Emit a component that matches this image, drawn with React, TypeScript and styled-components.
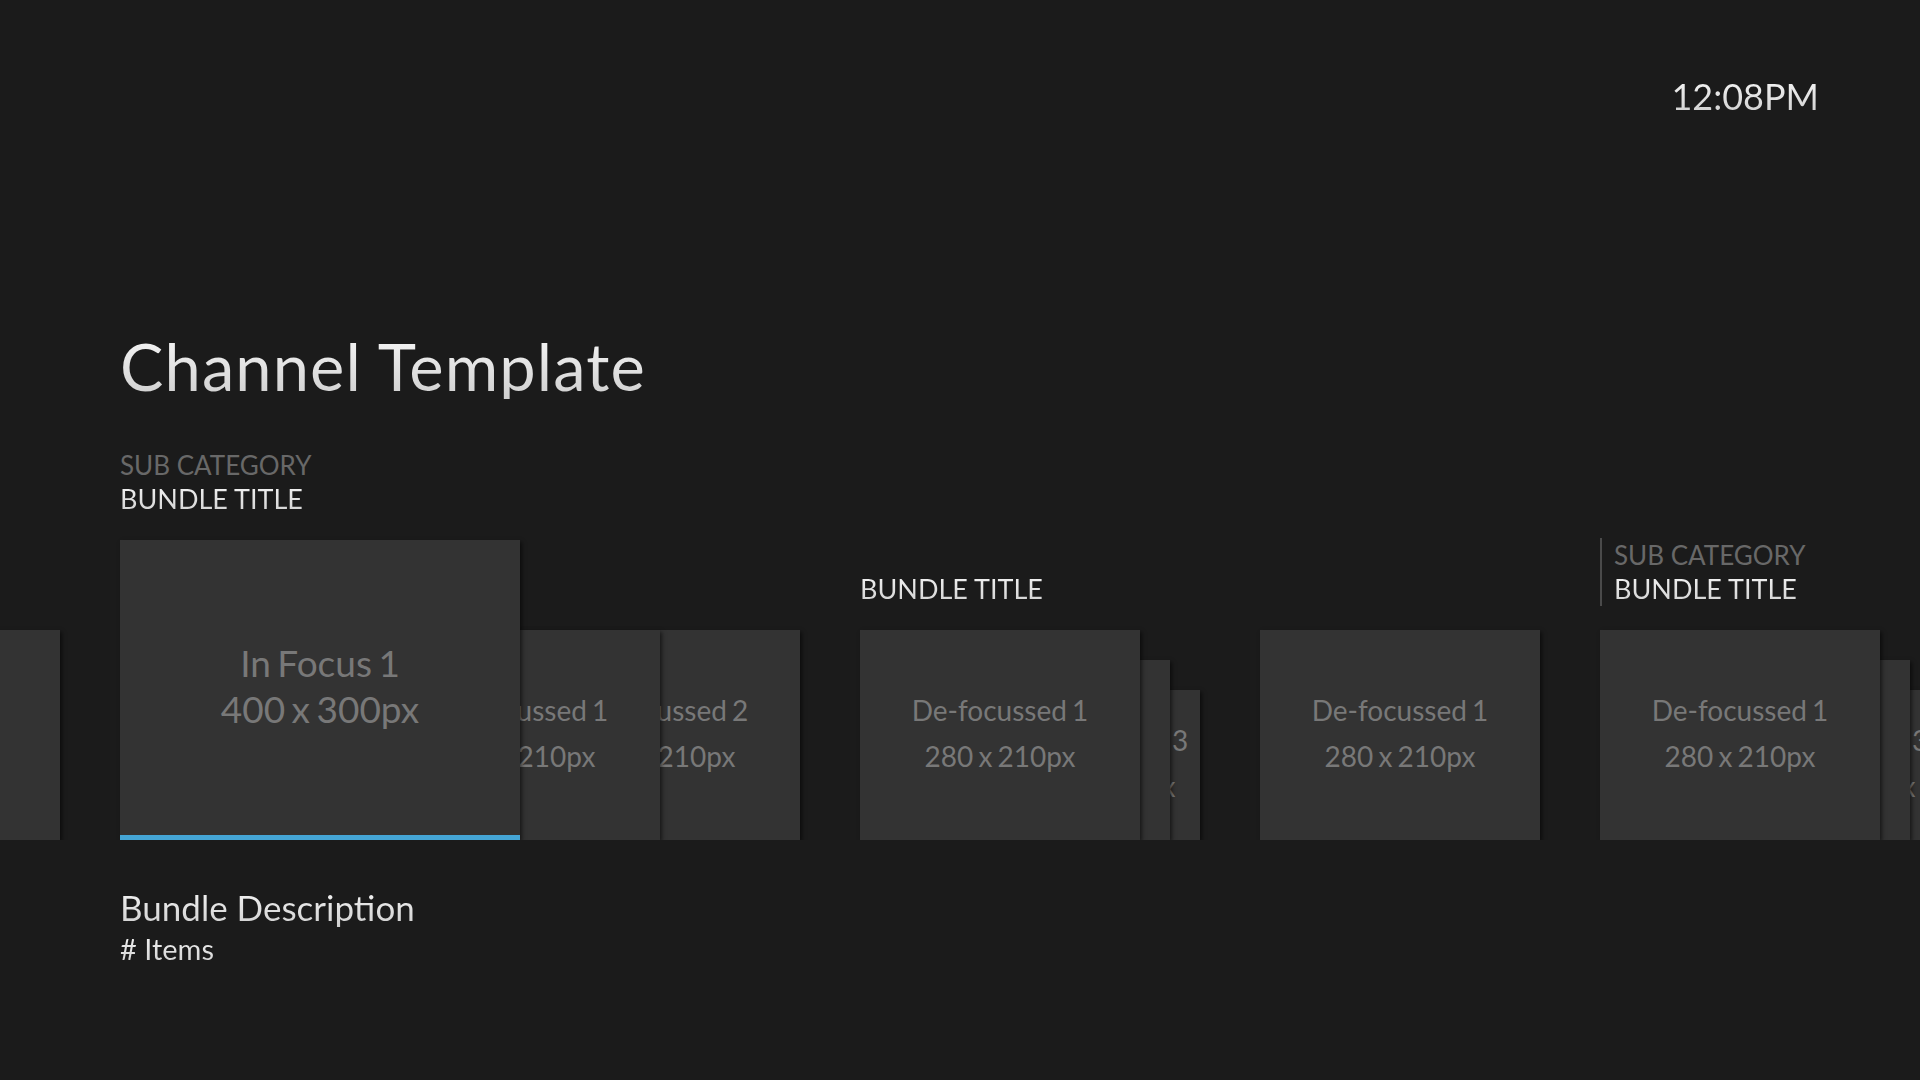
import { FC } from "react";
import styled, { createGlobalStyle, css } from "styled-components";

const GlobalStyle = createGlobalStyle`
    html, body {
        margin: 0;
        padding: 0;
        background: #1b1b1b;
    }
    body {
        font-family: Lato, "Open Sans", sans-serif;
    }
`;

const silver = css`
    background: linear-gradient(180deg, #f6f6f6 0%, #cfcfcf 100%);
    -webkit-background-clip: text;
    background-clip: text;
    color: transparent;
`;

const Screen = styled.div`
    width: 1920px;
    height: 1080px;
    overflow: hidden;
    background: #1b1b1b;
    display: flex;
    flex-direction: column;
`;

const TopBar = styled.header`
    display: flex;
    justify-content: flex-end;
    padding: 78px 101px 0;
`;

const Clock = styled.div`
    font-size: 36px;
    line-height: 36px;
    ${silver}
`;

const Title = styled.h1`
    margin: 220px 0 0 120px;
    font-size: 65px;
    line-height: 65px;
    font-weight: 400;
    letter-spacing: 1.1px;
    ${silver}
    width: fit-content;
`;

const Strip = styled.section`
    margin-top: 49px;
    overflow: hidden;
`;

const Track = styled.div`
    display: flex;
    align-items: flex-end;
    gap: 60px;
    margin-left: -220px;
`;

const Group = styled.div`
    display: flex;
    flex-direction: column;
    align-items: flex-start;
    flex-shrink: 0;
`;

const Label = styled.div<{ $divided?: boolean }>`
    display: flex;
    flex-direction: column;
    margin-bottom: 24px;
    padding-left: ${({ $divided }) => ($divided ? "12px" : "0")};
    border-left: ${({ $divided }) => ($divided ? "2px solid #4a4a4a" : "none")};
`;

const SubCategory = styled.span`
    font-size: 26px;
    line-height: 34px;
    color: #686868;
`;

const BundleTitle = styled.span`
    font-size: 27px;
    line-height: 34px;
    ${silver}
    width: fit-content;
`;

const Stack = styled.div`
    display: flex;
    align-items: flex-end;
`;

const Tile = styled.div<{ $w: number; $h: number; $z: number; $pull: number }>`
    position: relative;
    z-index: ${({ $z }) => $z};
    box-sizing: border-box;
    flex-shrink: 0;
    width: ${({ $w }) => $w}px;
    height: ${({ $h }) => $h}px;
    margin-left: ${({ $pull }) => -$pull}px;
    padding-bottom: 5px;
    background: #333333;
    box-shadow: 2px 2px 4px rgba(0, 0, 0, 0.55);
    display: flex;
    flex-direction: column;
    align-items: center;
    justify-content: center;
    color: #787878;
    font-size: 28px;
    line-height: 46px;
    word-spacing: -2px;
    white-space: nowrap;
`;

const FocusTile = styled(Tile)`
    font-size: 37px;
    word-spacing: -3px;
    padding-bottom: 4px;
    border-bottom: 5px solid #45a6d6;
`;

const Description = styled.section`
    display: flex;
    flex-direction: column;
    margin: 47px 0 0 120px;
`;

const DescTitle = styled.span`
    font-size: 35px;
    line-height: 40px;
    ${silver}
    width: fit-content;
`;

const DescCount = styled.span`
    font-size: 29px;
    line-height: 34px;
    margin-top: 5px;
    ${silver}
    width: fit-content;
`;

type Item = { w: number; h: number; pull: number; lines: [string, string] };

const full = (n: number, pull = 0): Item => ({
    w: 280,
    h: 210,
    pull,
    lines: [`De-focussed ${n}`, "280 x 210px"],
});

// back cards of a closed bundle peek out 30px each
const closedStack: Item[] = [
    full(1),
    { w: 240, h: 180, pull: 210, lines: ["De-focussed 2", "280 x 210px"] },
    { w: 200, h: 150, pull: 170, lines: ["De-focussed 3", "280 x 210px"] },
];

const offscreen: Item = { w: 280, h: 210, pull: 0, lines: ["", ""] };

const Tiles: FC<{ items: Item[]; offset?: number }> = ({ items, offset = 0 }) => (
    <>
        {items.map((it, i) => (
            <Tile key={i} $w={it.w} $h={it.h} $pull={it.pull} $z={10 - i - offset}>
                <span>{it.lines[0]}</span>
                <span>{it.lines[1]}</span>
            </Tile>
        ))}
    </>
);

const App: FC = () => (
    <Screen>
        <GlobalStyle />
        <TopBar>
            <Clock>12:08PM</Clock>
        </TopBar>
        <Title>Channel Template</Title>
        <Strip>
            <Track>
                <Group>
                    <Stack>
                        <Tiles items={[offscreen]} />
                    </Stack>
                </Group>
                <Group>
                    <Label>
                        <SubCategory>SUB CATEGORY</SubCategory>
                        <BundleTitle>BUNDLE TITLE</BundleTitle>
                    </Label>
                    <Stack>
                        <FocusTile $w={400} $h={300} $pull={0} $z={10}>
                            <span>In Focus 1</span>
                            <span>400 x 300px</span>
                        </FocusTile>
                        <Tiles items={[full(1, 140), full(2, 140)]} offset={1} />
                    </Stack>
                </Group>
                <Group>
                    <Label>
                        <BundleTitle>BUNDLE TITLE</BundleTitle>
                    </Label>
                    <Stack>
                        <Tiles items={closedStack} />
                    </Stack>
                </Group>
                <Group>
                    <Stack>
                        <Tiles items={[full(1)]} />
                    </Stack>
                </Group>
                <Group>
                    <Label $divided>
                        <SubCategory>SUB CATEGORY</SubCategory>
                        <BundleTitle>BUNDLE TITLE</BundleTitle>
                    </Label>
                    <Stack>
                        <Tiles items={closedStack} />
                    </Stack>
                </Group>
            </Track>
        </Strip>
        <Description>
            <DescTitle>Bundle Description</DescTitle>
            <DescCount># Items</DescCount>
        </Description>
    </Screen>
);

export default App;
